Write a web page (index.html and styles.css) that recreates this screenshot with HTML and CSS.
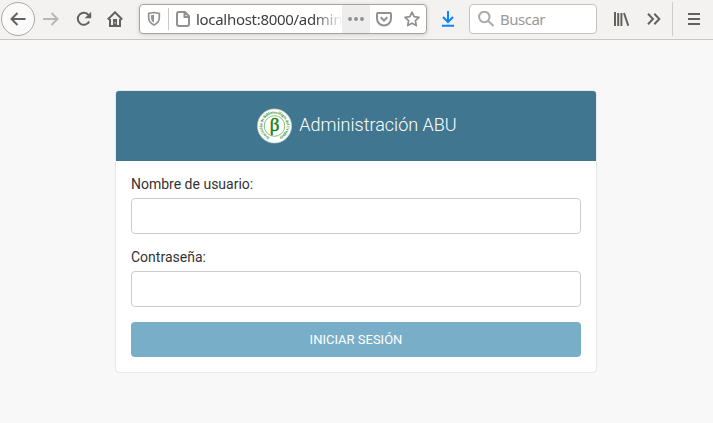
FILE: index.html
```html
<!DOCTYPE html>
<html lang="es">
<head>
<meta charset="utf-8">
<title>Administración ABU</title>
<link rel="stylesheet" href="styles.css">
</head>
<body>
<nav class="toolbar">
  <span class="back"><svg width="18" height="18" viewBox="0 0 18 18"><path class="line" d="M16.500 9H2.500M8.500 3l-6 6 6 6"/></svg></span>
  <svg class="forward" width="16" height="18" viewBox="0 0 16 18"><path class="line" d="M0 9h14M8.500 3l6 6-6 6"/></svg>
  <svg class="reload" width="16" height="16" viewBox="0 0 16 16"><path class="line" d="M13.200 10.500A6 6 0 1 1 12.600 4.200"/><path class="fill" d="M15.200.8v6.500H8.700z"/></svg>
  <svg class="home" width="16" height="16" viewBox="0 0 16 16"><path class="line" d="M.8 8.500 8 1.300l7.200 7.200M3 8v7h10V8"/><path class="fill" d="M6 8h4v7H6z"/><path d="M7.500 11.200h1.200v1.300H7.500z" fill="#f3f2f0"/></svg>
  <div class="urlbar">
    <svg class="shield" width="14" height="16" viewBox="0 0 14 16"><path class="line" d="M7 1.500 1.700 2.500v4.200c0 3.500 2 5.800 5.300 7.300 3.300-1.500 5.300-3.800 5.300-7.300V2.500z"/><path class="fill" d="M7 3.800v8C5 10.600 4 9 4 6.700V4.300z"/></svg>
    <span class="divider"></span>
    <svg class="page" width="14" height="16" viewBox="0 0 14 16"><path class="line" d="M3 1h6l4 4.200V13a2 2 0 0 1-2 2H3a2 2 0 0 1-2-2V3a2 2 0 0 1 2-2zM8.500 1.500V6H13"/></svg>
    <span class="address">localhost:8000/admin</span>
    <span class="actions"><svg width="16" height="4" viewBox="0 0 16 4"><g class="fill"><circle cx="2" cy="2" r="2"/><circle cx="8" cy="2" r="2"/><circle cx="14" cy="2" r="2"/></g></svg></span>
    <svg class="pocket" width="16" height="16" viewBox="0 0 16 16"><path class="line" d="M2 2h12a1 1 0 0 1 1 1v4.500a7 7 0 0 1-14 0V3a1 1 0 0 1 1-1zM4.700 6.300 8 9.500l3.300-3.200"/></svg>
    <svg class="star" width="16" height="16" viewBox="0 0 16 16"><path class="line" d="m8 1.200 2.100 4.500 4.900.6-3.600 3.400.9 4.900L8 12.200l-4.300 2.400.9-4.900L1 6.300l4.900-.6z"/></svg>
  </div>
  <svg class="download" width="12" height="16" viewBox="0 0 12 16"><path class="line" d="M6 0v10.500M1 6l5 5 5-5M0 14.700h12"/></svg>
  <div class="search">
    <svg width="16" height="16" viewBox="0 0 16 16"><path class="line" d="M11.500 6A5.200 5.200 0 1 1 1.100 6a5.200 5.200 0 0 1 10.400 0zM10 9.700l5.500 5.300"/></svg>
    <span>Buscar</span>
  </div>
  <svg class="library" width="15" height="14" viewBox="0 0 15 14"><path class="line" d="M1 0v14M4.200 1v13M7.400 1v13M10 1l4.300 12.700"/></svg>
  <svg class="more" width="14" height="12" viewBox="0 0 14 12"><path class="line" d="m1 .7 5 5.300-5 5.300M7.300.7l5 5.300-5 5.300"/></svg>
  <span class="separator"></span>
  <svg class="menu" width="12" height="12" viewBox="0 0 12 12"><path class="line" d="M0 1h12M0 6h12M0 11h12"/></svg>
</nav>
<main class="login">
  <header class="login-header">
    <svg class="logo" width="35" height="36" viewBox="0 0 35 36">
      <defs><path id="ring" d="M13 29.400A12.300 12.300 0 1 1 22 29.400"/></defs>
      <circle cx="17.500" cy="18" r="17.100" fill="#fff" stroke="#b9dcb5" stroke-width=".6"/>
      <circle cx="17.500" cy="18" r="10.300" fill="none" stroke="#68ad61" stroke-width=".8"/>
      <text class="motto"><textPath href="#ring" textLength="67" lengthAdjust="spacingAndGlyphs">Asociación de Bibliotecólogos del Uruguay</textPath></text>
      <text class="beta" x="17.500" y="22.800">β</text>
    </svg>
    <h1>Administración ABU</h1>
  </header>
  <form class="login-form">
    <label for="user">Nombre de usuario:</label>
    <input id="user" type="text">
    <label for="password">Contraseña:</label>
    <input id="password" type="password">
    <button type="button">INICIAR SESIÓN</button>
  </form>
</main>
</body>
</html>
```
FILE: styles.css
```css
* { box-sizing: border-box; }
body { margin: 0; height: 423px; overflow: hidden; background: #f8f8f8; font-family: Roboto, sans-serif; }
svg { display: block; flex: none; }
.line { fill: none; stroke: currentColor; stroke-width: 2; }
.fill { fill: currentColor; }

.toolbar { display: flex; align-items: center; height: 40px; padding: 0 0 2px 1px; background: #f3f2f0; border-bottom: 1px solid #c8c6c4; color: #65615e; }
.back { display: flex; flex: none; align-items: center; justify-content: center; width: 34px; height: 34px; border: 1px solid #aaa8a6; border-radius: 50%; background: #fafafa; }
.forward { margin-left: 8px; color: #bab8b6; }
.reload { margin-left: 17px; }
.home { margin-left: 15px; }
.urlbar, .search { display: flex; flex: none; align-items: center; height: 30px; margin-top: 1px; background: #fff; border: 1px solid #c5c2bf; border-radius: 4px; font: 15px "Noto Sans", sans-serif; }
.urlbar { width: 288px; margin-left: 16px; border-color: #a5a29f; box-shadow: 0 1px 4px rgba(0, 0, 0, .14); color: #929090; }
.shield { margin-left: 7px; }
.shield .line { stroke-width: 1.7; }
.divider { width: 1px; height: 22px; margin-left: 7px; background: #c9c9c9; }
.page { margin-left: 7px; }
.address { flex: none; width: 146px; margin-left: 6px; white-space: nowrap; line-height: 24px; letter-spacing: -.3px; color: #3f3f3f; -webkit-mask-image: linear-gradient(90deg, #000 117px, transparent 147px); mask-image: linear-gradient(90deg, #000 117px, transparent 147px); }
.actions { display: flex; flex: none; align-items: center; justify-content: center; width: 28px; height: 28px; background: #ededed; }
.pocket { margin-left: 6px; }
.star { margin-left: 12px; }
.star .line { stroke-width: 1.7; stroke-linejoin: round; }
.download { margin-left: 15px; color: #0a84ff; }
.search { width: 128px; margin-left: 15px; padding-left: 8px; gap: 6px; color: #999; letter-spacing: -.5px; }
.search svg { color: #aaa; }
.library { margin-left: 17px; }
.more { margin-left: 18px; }
.separator { width: 1px; height: 34px; margin-left: 11px; background: #cfcdcb; }
.menu { margin-left: 15px; }

.login { width: 482px; height: 283px; margin: 50px 0 0 115px; border: 1px solid #e7e7e7; border-radius: 4px; background: #fff; overflow: hidden; }
.login-header { display: flex; align-items: center; justify-content: center; height: 70px; padding-left: 2px; background: #417690; color: #fff; }
.login-header h1 { margin: 0 0 3px 7px; font-size: 18px; font-weight: 300; line-height: 22px; }
.motto { font: bold 4.4px "Liberation Serif", serif; fill: #258b20; }
.beta { font: 19px "Liberation Serif", serif; fill: #138009; stroke: #138009; stroke-width: .4; text-anchor: middle; }
.login-form { display: flex; flex-direction: column; padding: 15px 15px 0; }
.login-form label { height: 16px; margin-bottom: 6px; font-size: 14px; line-height: 16px; color: #333; }
.login-form input { width: 450px; height: 36px; margin: 0 0 15px; border: 1px solid #ccc; border-radius: 4px; background: #fff; }
.login-form button { height: 35px; padding: 0; border: 0; border-radius: 4px; background: #79aec8; color: #fff; font: 13px Roboto, sans-serif; }
```
